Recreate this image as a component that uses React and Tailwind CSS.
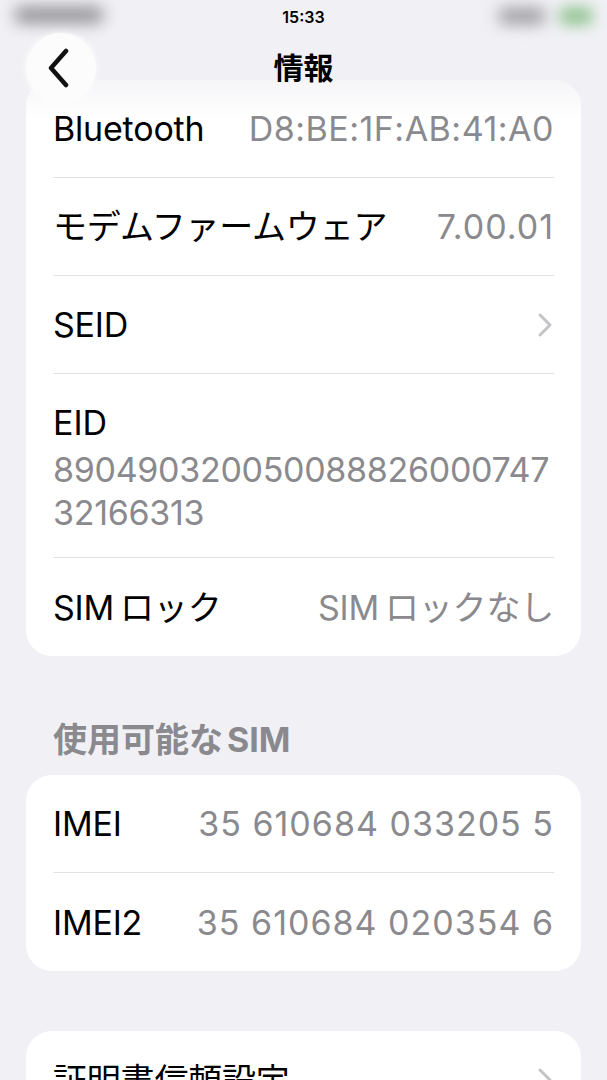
import React from "react";

const font = { fontFamily: '"Inter", "Noto Sans CJK JP", sans-serif' };

const Chevron = ({ className = "" }) => (
  <svg viewBox="0 0 16 26" className={className} fill="none">
    <path
      d="M3 3 L13 13 L3 23"
      stroke="currentColor"
      strokeWidth="3"
      strokeLinecap="round"
      strokeLinejoin="round"
    />
  </svg>
);

const Row = ({ label, value, valueClass = "", chevron, last }) => (
  <div
    className={`flex items-center justify-between h-[98px] ${
      last ? "" : "border-b border-[#e2e2e5]"
    }`}
  >
    <span className="text-[34px] text-black tracking-[-0.2px]">{label}</span>
    {value && (
      <span className={`text-[34px] text-[#8a8a8e] ${valueClass || "tracking-[-0.2px]"}`}>
        {value}
      </span>
    )}
    {chevron && <Chevron className="w-[16px] h-[26px] text-[#c4c4c7] mr-[1px]" />}
  </div>
);

export default function App() {
  return (
    <div
      className="relative w-[607px] h-[1080px] overflow-hidden bg-[#f1f1f5]"
      style={font}
    >
      {/* nav bar */}
      <div className="absolute top-0 left-0 right-0 h-[118px] z-10 bg-linear-to-b from-[#f1f1f5] from-55% to-[#f1f1f5]/0">
        <div className="relative h-[32px]">
          <div className="absolute left-[14px] top-[7px] w-[90px] h-[16px] rounded-full bg-[#8e8e92] blur-[8px]" />
          <div className="absolute left-[498px] top-[8px] w-[48px] h-[16px] rounded-full bg-[#9a9a9e] blur-[8px]" />
          <div className="absolute left-[558px] top-[6px] w-[36px] h-[20px] rounded-full bg-[#9cc89c] blur-[7px]" />
          <div className="text-center pt-[5px] text-[16px] font-semibold text-black">
            15:33
          </div>
        </div>
        <div className="relative flex items-center h-[72px]">
          <div className="ml-[26px] w-[70px] h-[70px] rounded-full bg-[#fcfcfc] shadow-[0_0_6px_rgba(255,255,255,0.9)] flex items-center justify-center">
            <svg viewBox="0 0 24 40" className="w-[24px] h-[40px] mr-[4px]" fill="none">
              <path
                d="M19 3 L4 20 L19 37"
                stroke="#111"
                strokeWidth="4.5"
                strokeLinecap="round"
                strokeLinejoin="round"
              />
            </svg>
          </div>
          <div className="absolute left-0 right-0 text-center text-[30px] font-bold text-black pointer-events-none">
            情報
          </div>
        </div>
      </div>

      {/* content */}
      <div className="pt-[80px] px-[26px]">
        <div className="bg-white rounded-[26px] px-[27px]">
          <Row
            label="Bluetooth"
            value="D8:BE:1F:AB:41:A0"
            valueClass="tracking-[0.5px]"
          />
          <Row label="モデムファームウェア" value="7.00.01" valueClass="tracking-[1px]" />
          <Row label="SEID" chevron />
          <div className="border-b border-[#e2e2e5] pt-[29px] pb-[23px]">
            <div className="text-[34px] leading-[40px] text-black">EID</div>
            <div className="mt-[5px] text-[34px] leading-[43px] text-[#8a8a8e] break-all tracking-[-0.3px]">
              890490320050088826000747
              <br />
              32166313
            </div>
          </div>
          <Row
            label={
              <>
                SIM<span className="ml-[6px]">ロック</span>
              </>
            }
            value={
              <>
                SIM<span className="ml-[6px]">ロックなし</span>
              </>
            }
            last
          />
        </div>

        <div className="pt-[64px] pb-[15px] px-[27px] text-[34px] leading-[40px] font-bold text-[#8a8a8e]">
          使用可能な<span className="ml-[4px]">SIM</span>
        </div>

        <div className="bg-white rounded-[26px] px-[27px]">
          <Row label="IMEI" value="35 610684 033205 5" valueClass="tracking-[1px]" />
          <Row label="IMEI2" value="35 610684 020354 6" valueClass="tracking-[1px]" last />
        </div>

        <div className="mt-[60px] bg-white rounded-[26px] px-[27px]">
          <Row label="証明書信頼設定" chevron last />
        </div>
      </div>
    </div>
  );
}
